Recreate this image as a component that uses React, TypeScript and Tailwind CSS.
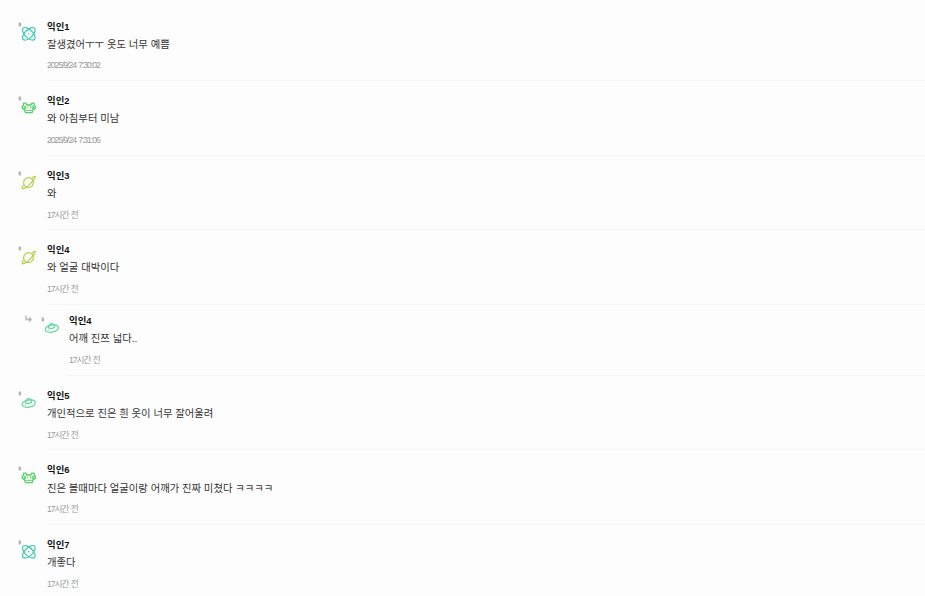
import { clsx } from "clsx";

type Avatar = "atom" | "alien" | "planet" | "ufo";

interface Comment {
  id: number;
  name: string;
  text: string;
  time: string;
  avatar: Avatar;
  reply?: boolean;
}

const comments: Comment[] = [
  { id: 1, name: "익인1", text: "잘생겼어ㅜㅜ 옷도 너무 예쁨", time: "2025/9/24 7:30:02", avatar: "atom" },
  { id: 2, name: "익인2", text: "와 아침부터 미남", time: "2025/9/24 7:31:06", avatar: "alien" },
  { id: 3, name: "익인3", text: "와", time: "17시간 전", avatar: "planet" },
  { id: 4, name: "익인4", text: "와 얼굴 대박이다", time: "17시간 전", avatar: "planet" },
  { id: 5, name: "익인4", text: "어깨 진쯔 넓다..", time: "17시간 전", avatar: "ufo", reply: true },
  { id: 6, name: "익인5", text: "개인적으로 진은 흰 옷이 너무 잘어울려", time: "17시간 전", avatar: "ufo" },
  { id: 7, name: "익인6", text: "진은 볼때마다 얼굴이랑 어깨가 진짜 미쳤다 ㅋㅋㅋㅋ", time: "17시간 전", avatar: "alien" },
  { id: 8, name: "익인7", text: "개좋다", time: "17시간 전", avatar: "atom" },
];

function AvatarIcon({ type }: { type: Avatar }) {
  if (type === "atom") {
    return (
      <svg viewBox="0 0 15 15" className="size-[15px]" fill="none" stroke="#3fcab0" strokeWidth="1.2">
        <ellipse cx="7.8" cy="7.8" rx="8" ry="3.9" transform="rotate(45 7.8 7.8)" />
        <ellipse cx="7.8" cy="7.8" rx="8" ry="3.9" transform="rotate(-45 7.8 7.8)" />
        <circle cx="7.8" cy="7.8" r="0.8" fill="#3fcab0" stroke="none" />
      </svg>
    );
  }
  if (type === "alien") {
    return (
      <svg viewBox="0 0 15 15" className="size-[15px]" fill="none" stroke="#4fd264" strokeWidth="1.3">
        <path d="M2.200 3.200h2.600l1 1.800h4l1-1.800h2.600M2.500 3.200v2L1.300 6v2.400l2.200 1.400 1 2.800h6.600l1-2.800 2.200-1.400V6l-1.200-.8v-2" />
        <path d="M3 6.500h1.500v2H3zM11.100 6.500h1.500v2h-1.500zM6.200 6.500v1.800M9.400 6.500v1.800M4.500 10.300h6.600" strokeWidth="1" />
      </svg>
    );
  }
  if (type === "planet") {
    return (
      <svg viewBox="0 0 15 15" className="size-[15px]" fill="none" stroke="#b4d04a" strokeWidth="1.2">
        <circle cx="7.5" cy="7.600" r="4.900" />
        <path d="M10.900 3.200c1.700-1.500 3.100-2.300 3.400-1.800.400.7-.7 2.400-2.300 4.300M12 5.700C9.100 9.400 4.300 13.700 1.700 13.800c-1 0-.6-1.600.9-3.800" />
      </svg>
    );
  }
  return (
    <svg viewBox="0 0 15 15" className="size-[15px]" fill="none" stroke="#67d5a0" strokeWidth="1.2">
      <ellipse cx="7.800" cy="8.600" rx="6.700" ry="3.600" transform="rotate(-11 7.800 8.600)" />
      <path d="M4.600 7.700C4.900 4.900 6 3.700 7.600 3.700s2.700.9 3.100 3.100c-1.300 1.700-4.500 2.300-6.100.9zM3.800 10.300l1-.4" />
    </svg>
  );
}

function CommentRow({ comment }: { comment: Comment }) {
  const { name, text, time, avatar, reply } = comment;

  return (
    <li className={clsx("flex", reply ? "h-[71px] pl-[24px]" : "h-[74.6px] pl-[18px]")}>
      {/* Reply arrow */}
      {reply && (
        <svg viewBox="0 0 8 8" className="mt-[10px] mr-[9px] h-2 w-2 shrink-0" fill="none" stroke="#b5b5b5" strokeWidth="1.3">
          <path d="M2 0.500v4h4.500M5 2.300l2.200 2.200L5 6.700" />
        </svg>
      )}
      <svg
        viewBox="0 0 3 5"
        className={clsx("h-[5px] w-[3px] shrink-0", reply ? "mt-[12px]" : "mt-[15.500px]")}
      >
        <rect x="0.600" y="0.400" width="2.400" height="4" rx="0.300" fill="#b4b4b4" />
      </svg>
      <div className={clsx("shrink-0", reply ? "w-[25px] pt-[15.400px]" : "w-[26px] pt-[19.400px]")}>
        <AvatarIcon type={avatar} />
      </div>
      <div
        className={clsx(
          "min-w-0 flex-1 border-b border-[#f5f7f6]",
          reply ? "pt-[8.200px]" : "pt-[12.120px]",
        )}
      >
        <div className="h-[15px] text-[9.400px] leading-[15px] font-bold text-[#111]">{name}</div>
        <p className="mt-[2.080px] h-[18px] text-[10.340px] leading-[18px] text-[#333]">{text}</p>
        <div className="mt-[4.920px] text-[8.700px] leading-[14px] tracking-[-1.080px] text-[#999] [word-spacing:1px]">
          {time}
        </div>
      </div>
    </li>
  );
}

function App() {
  return (
    <main className="h-[596px] overflow-hidden bg-[#fdfdfd] pt-[6.400px] font-['Liberation_Sans','Noto_Sans_CJK_KR',sans-serif]">
      <ul>
        {comments.map((comment) => (
          <CommentRow key={comment.id} comment={comment} />
        ))}
      </ul>
    </main>
  );
}

export default App;
